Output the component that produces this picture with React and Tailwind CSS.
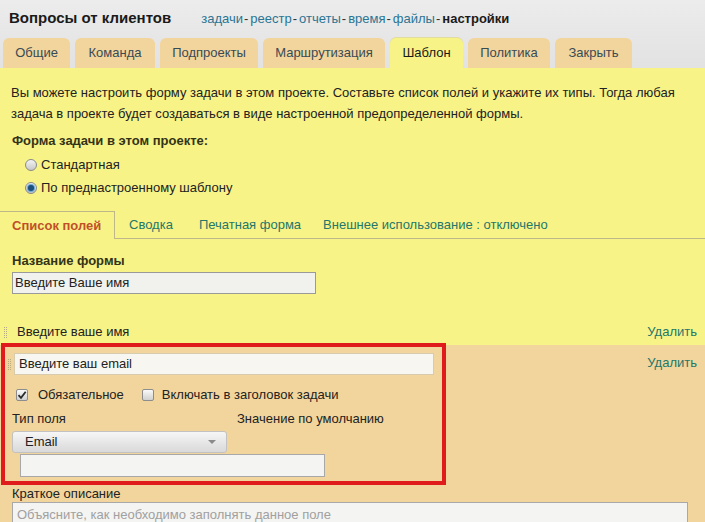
import React from "react";

const tabs = [
  ["Общие", "w-[67px]"],
  ["Команда", "w-[80px]"],
  ["Подпроекты", "w-[98px]"],
  ["Маршрутизация", "w-[122px]"],
  ["Шаблон", "w-[73px]"],
  ["Политика", "w-[82px]"],
  ["Закрыть", "w-[77px]"],
];
const nav = ["задачи", "реестр", "отчеты", "время", "файлы"];

function Dots({ className = "" }) {
  return (
    <div className={"grid grid-cols-2 gap-x-[1px] gap-y-[1px] " + className}>
      {Array.from({ length: 12 }).map((_, i) => (
        <span key={i} className="w-[1px] h-[1px] bg-[#b5aa80]" />
      ))}
    </div>
  );
}

function Radio({ checked }) {
  return (
    <span className="w-[12px] h-[12px] rounded-full border border-[#8a8a8a] bg-gradient-to-b from-[#f4f4f4] to-[#c8c8c8] flex items-center justify-center">
      {checked && <span className="w-[6px] h-[6px] rounded-full bg-[#1c4f7a] shadow-[0_0_1px_1px_#5fa3d6]" />}
    </span>
  );
}

function Check({ checked }) {
  return (
    <span className="w-[12px] h-[12px] rounded-[2px] border border-[#8d8d8d] bg-gradient-to-b from-[#fafafa] to-[#d0d0d0] flex items-center justify-center">
      {checked && (
        <svg width="10" height="10" viewBox="0 0 10 10">
          <path d="M1.5 5.2 L4 7.8 L8.7 1.8" fill="none" stroke="#2a2a2a" strokeWidth="1.8" />
        </svg>
      )}
    </span>
  );
}

export default function App() {
  return (
    <div className="w-[705px] h-[522px] overflow-hidden font-['Liberation_Sans',Arial,sans-serif] text-[13px] text-[#222]">
      {/* шапка */}
      <div className="bg-gradient-to-b from-[#ececec] to-[#e2e2e2]">
        <div className="h-[36px] flex items-center pl-[9px] pt-[1px]">
          <span className="text-[15px] font-bold text-[#1a1a1a]">Вопросы от клиентов</span>
          <span className="ml-[30px] flex items-center text-[13px]">
            {nav.map((n) => (
              <span key={n} className="flex items-center">
                <span className="text-[#2b7594]">{n}</span>
                <span className="ml-[1px] mr-[2px] text-[#333]">-</span>
              </span>
            ))}
            <span className="font-bold text-[#1a1a1a]">настройки</span>
          </span>
        </div>
        <div className="h-[32px] flex items-end gap-[5px] pl-[3px]">
          {tabs.map(([t, w]) => (
            <div
              key={t}
              className={
                "h-[30px] rounded-t-[6px] flex items-center justify-center " +
                w +
                " " +
                (t === "Шаблон" ? "bg-[#f8f387] text-[#1a1a1a] shadow-[0_-1px_0_#e2dca0]" : "bg-[#f1d59c] text-[#3a4a55]")
              }
            >
              {t}
            </div>
          ))}
        </div>
      </div>

      {/* жёлтая панель */}
      <div className="bg-[#f8f387]">
        <p className="pt-[14px] px-[11px] leading-[21px]">
          Вы можете настроить форму задачи в этом проекте. Составьте список полей и укажите их типы. Тогда любая
          задача в проекте будет создаваться в виде настроенной предопределенной формы.
        </p>
        <div className="mt-[7px] pl-[12px] leading-[20px] font-bold text-[#333318]">Форма задачи в этом проекте:</div>
        <div className="mt-[2px] pl-[25px]">
          <label className="h-[23px] flex items-center gap-[4px]">
            <Radio />
            <span>Стандартная</span>
          </label>
          <label className="h-[23px] flex items-center gap-[4px]">
            <Radio checked />
            <span>По преднастроенному шаблону</span>
          </label>
        </div>

        <div className="mt-[12px] h-[28px] flex items-end border-b border-[#bdb78a]">
          <div className="h-[28px] w-[115px] -mb-[1px] border border-b-0 border-[#bdb78a] border-l-0 bg-[#f8f387] flex items-center pl-[12px] font-bold text-[#c0502a]">
            Список полей
          </div>
          <div className="h-[27px] flex items-center text-[#24776a]">
            <span className="ml-[14px]">Сводка</span>
            <span className="ml-[26px]">Печатная форма</span>
            <span className="ml-[22px]">Внешнее использование : отключено</span>
          </div>
        </div>

        <div className="mt-[13px] pl-[12px] leading-[18px] font-bold text-[#333318]">Название формы</div>
        <div className="mt-[2px] ml-[12px] w-[304px] h-[22px] border border-[#9a9a9a] bg-[#f1f1ee] flex items-center pl-[2px]">
          Введите Ваше имя
        </div>

        <div className="mt-[25px] h-[26px] flex items-center pr-[8px]">
          <Dots className="ml-[4px]" />
          <span className="ml-[10px]">Введите ваше имя</span>
          <span className="ml-auto text-[#24776a]">Удалить</span>
        </div>
      </div>

      {/* выбранное поле */}
      <div className="relative bg-[#f1d59c] pb-[40px]">
        <div className="pt-[8px] flex items-center pr-[8px]">
          <Dots className="ml-[8px]" />
          <div className="ml-[3px] w-[420px] h-[22px] border border-[#d8ccae] bg-[#f7f6f0] flex items-center pl-[4px]">
            Введите ваш email
          </div>
          <span className="ml-auto -mt-[2px] text-[#24776a]">Удалить</span>
        </div>

        <div className="mt-[10px] h-[20px] flex items-center pl-[16px]">
          <Check checked />
          <span className="ml-[10px]">Обязательное</span>
          <span className="ml-[18px]"><Check /></span>
          <span className="ml-[8px]">Включать в заголовок задачи</span>
        </div>

        <div className="mt-[5px] h-[18px] flex items-center pl-[12px]">
          <span className="w-[225px]">Тип поля</span>
          <span>Значение по умолчанию</span>
        </div>

        <div className="mt-[3px] ml-[12px] w-[215px] h-[22px] rounded-[3px] border border-[#c2c2c2] bg-gradient-to-b from-[#f6f6f6] to-[#d9d9d9] flex items-center pl-[12px] pr-[10px]">
          <span>Email</span>
          <span className="ml-auto w-0 h-0 border-l-[4px] border-r-[4px] border-t-[4px] border-l-transparent border-r-transparent border-t-[#8a8a8a]" />
        </div>
        <div className="mt-[1px] ml-[20px] w-[305px] h-[23px] border border-[#a8a8a8] bg-[#f4f4f2]" />

        <div className="mt-[9px] pl-[12px] leading-[16px]">Краткое описание</div>
        <div className="ml-[12px] w-[676px] h-[40px] border border-[#a8a8a8] bg-[#f4f4f2] pl-[4px] pt-[2px] text-[#a0a0a0]">
          Объясните, как необходимо заполнять данное поле
        </div>

        <div className="absolute left-[1px] -top-[2px] w-[445px] h-[142px] border-[4px] border-[#df1b1b] pointer-events-none" />
      </div>
    </div>
  );
}
